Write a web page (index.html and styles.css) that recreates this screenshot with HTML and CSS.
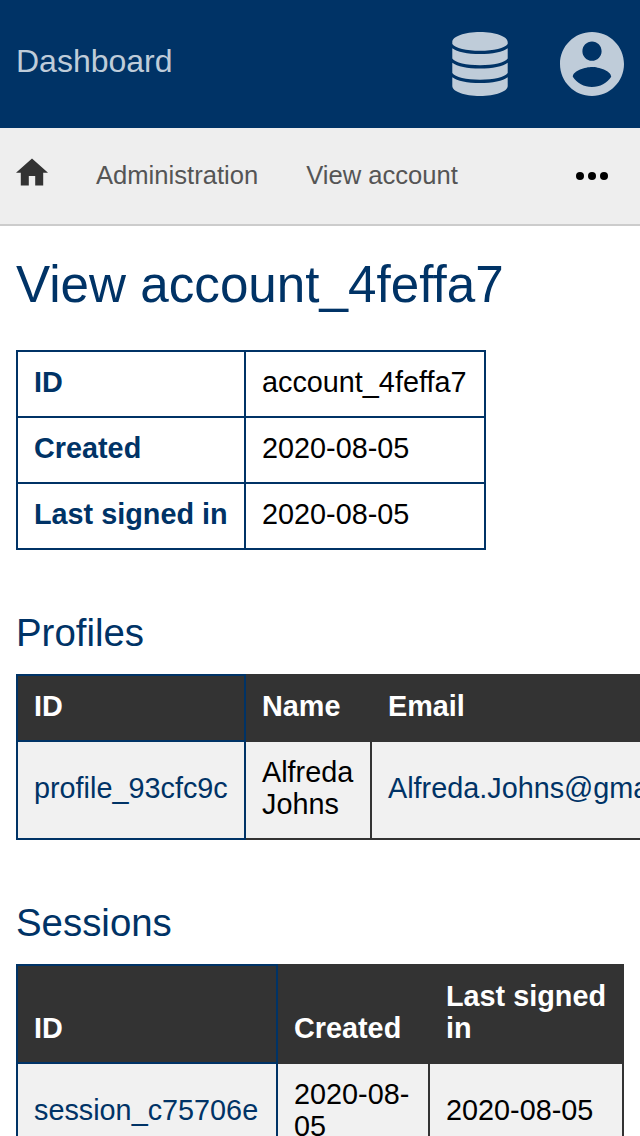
FILE: index.html
```html
<!DOCTYPE html>
<html lang="en">
<head>
<meta charset="utf-8">
<title>View account</title>
<link rel="stylesheet" href="styles.css">
</head>
<body>
<header class="topbar">
  <a class="brand">Dashboard</a>
  <svg class="icon-db" viewBox="0 0 56 64"><path d="M.3 10C.3 4.500 12.500 0 28 0S55.700 4.500 55.700 10V12C53 16.200 41.500 18.800 28 18.800S3 16.200 .3 12zM.3 16.200C5 19.900 15.500 22.100 28 22.100S51 19.900 55.700 16.200V26.500C53 30.700 41.500 33.200 28 33.200S3 30.700 .3 26.500zM.3 30.700C5 34.400 15.500 36.500 28 36.500S51 34.400 55.700 30.700V41C53 45.200 41.500 47.700 28 47.700S3 45.200 .3 41zM.3 45.200C5 48.900 15.500 51 28 51S51 48.900 55.700 45.200V54C55.700 59.500 43.500 64 28 64S.3 59.500 .3 54z"/></svg>
  <svg class="icon-user" viewBox="2 2 20 20"><path d="M12 2C6.48 2 2 6.48 2 12s4.48 10 10 10 10-4.48 10-10S17.52 2 12 2zm0 3c1.66 0 3 1.34 3 3s-1.34 3-3 3-3-1.34-3-3 1.34-3 3-3zm0 14.2c-2.5 0-4.71-1.28-6-3.22.03-1.99 4-3.08 6-3.08 1.99 0 5.97 1.09 6 3.08-1.29 1.94-3.5 3.22-6 3.22z"/></svg>
</header>
<nav class="crumbs">
  <svg class="icon-home" viewBox="2 3 20 17"><path d="M10 20v-6h4v6h5v-8h3L12 3 2 12h3v8z"/></svg>
  <a class="crumb">Administration</a>
  <a class="crumb">View account</a>
  <svg class="icon-more" viewBox="0 0 32 8"><circle cx="4" cy="4" r="4"/><circle cx="16" cy="4" r="4"/><circle cx="28" cy="4" r="4"/></svg>
</nav>
<main class="content">
  <h1>View account_4feffa7</h1>
  <table class="details">
    <colgroup><col class="w228"><col class="w240"></colgroup>
    <tr><th>ID</th><td>account_4feffa7</td></tr>
    <tr><th>Created</th><td>2020-08-05</td></tr>
    <tr><th>Last signed in</th><td>2020-08-05</td></tr>
  </table>
  <h2>Profiles</h2>
  <table class="list profiles">
    <colgroup><col class="w228"><col class="w126"><col></colgroup>
    <thead><tr><th>ID</th><th>Name</th><th>Email</th></tr></thead>
    <tbody><tr><td><a>profile_93cfc9c</a></td><td>Alfreda Johns</td><td><a>Alfreda.Johns@gmail.com</a></td></tr></tbody>
  </table>
  <h2>Sessions</h2>
  <table class="list sessions">
    <colgroup><col class="w260"><col class="w152"><col></colgroup>
    <thead><tr><th>ID</th><th>Created</th><th>Last signed in</th></tr></thead>
    <tbody><tr><td><a>session_c75706e</a></td><td>2020-08-05</td><td>2020-08-05</td></tr></tbody>
  </table>
</main>
</body>
</html>
```

FILE: styles.css
```css
* { box-sizing: border-box; }
html, body { height: 1136px; overflow: hidden; }
body {
  margin: 0;
  background: #fff;
  color: #000;
  font: 28.8px/32px "Liberation Sans", Arial, sans-serif;
}
.topbar {
  display: flex;
  align-items: center;
  height: 128px;
  padding: 0 16px;
  background: #003366;
  color: #bfccd9;
  fill: #bfccd9;
}
.brand { flex: 1; font-size: 32px; line-height: 36px; padding-bottom: 6px; }
.icon-db { width: 56px; height: 64px; margin-right: 52px; }
.icon-user { width: 64px; height: 64px; }
.crumbs {
  display: flex;
  align-items: center;
  gap: 48px;
  height: 98px;
  padding: 0 32px 0 16px;
  background: #eee;
  border-bottom: 2px solid #ccc;
  color: #555;
  font-size: 25.6px;
}
.crumb { padding-bottom: 2px; }
.icon-home { width: 32px; height: 28px; margin-bottom: 8px; fill: #333; }
.icon-more { width: 32px; height: 8px; margin-left: auto; }
.content { padding: 29px 16px 0; }
h1, h2 { margin: 0; color: #003366; font-weight: 400; }
h1 { font-size: 51.2px; line-height: 60px; margin-bottom: 35px; }
h2 { font-size: 38.4px; line-height: 44px; margin: 61px 0 19px; }
table { border-collapse: collapse; table-layout: fixed; }
th, td {
  padding: 14px 16px 18px;
  border: 2px solid #333;
  text-align: left;
  vertical-align: middle;
}
a { color: inherit; }
.details { width: 470px; }
.details th, .details td { border-color: #003366; }
.details th { color: #003366; }
.list td { background: #f1f1f1; }
.list thead th { background: #333; color: #fff; vertical-align: bottom; }
.list th:first-child, .list td:first-child { border-color: #003366; }
.list a { color: #003366; }
.profiles { width: 740px; }
.sessions { width: 608px; }
.w126 { width: 126px; }
.w152 { width: 152px; }
.w228 { width: 228px; }
.w240 { width: 240px; }
.w260 { width: 260px; }
```
